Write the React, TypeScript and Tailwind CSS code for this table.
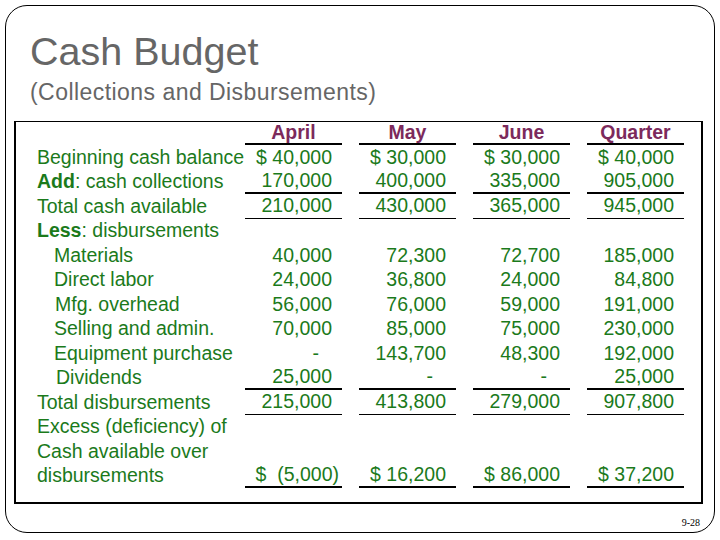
import React from 'react';

type Row = {
  label: React.ReactNode;
  indent?: string;
  values?: string[];
  line?: 'thick' | 'thin';
  header?: boolean;
};

const rows: Row[] = [
  { label: '', values: ['April', 'May', 'June', 'Quarter'], line: 'thick', header: true },
  { label: 'Beginning cash balance', values: ['$ 40,000', '$ 30,000', '$ 30,000', '$ 40,000'] },
  {
    label: (
      <>
        <span className="font-bold">Add</span>: cash collections
      </>
    ),
    values: ['170,000', '400,000', '335,000', '905,000'],
    line: 'thick',
  },
  { label: 'Total cash available', values: ['210,000', '430,000', '365,000', '945,000'], line: 'thin' },
  {
    label: (
      <>
        <span className="font-bold">Less</span>: disbursements
      </>
    ),
  },
  { label: 'Materials', indent: 'pl-[17px]', values: ['40,000', '72,300', '72,700', '185,000'] },
  { label: 'Direct labor', indent: 'pl-[17px]', values: ['24,000', '36,800', '24,000', '84,800'] },
  { label: 'Mfg. overhead', indent: 'pl-[18px]', values: ['56,000', '76,000', '59,000', '191,000'] },
  { label: 'Selling and admin.', indent: 'pl-[17px]', values: ['70,000', '85,000', '75,000', '230,000'] },
  { label: 'Equipment purchase', indent: 'pl-[17px]', values: ['-', '143,700', '48,300', '192,000'] },
  { label: 'Dividends', indent: 'pl-[19px]', values: ['25,000', '-', '-', '25,000'], line: 'thick' },
  { label: 'Total disbursements', values: ['215,000', '413,800', '279,000', '907,800'], line: 'thin' },
  { label: 'Excess (deficiency) of' },
  { label: 'Cash available over' },
  { label: 'disbursements', values: ['$  (5,000)', '$ 16,200', '$ 86,000', '$ 37,200'], line: 'thick' },
];

const Cell = ({ value, row }: { value?: string; row: Row }) => {
  const border =
    row.line === 'thick' ? 'border-b-2 border-black' : row.line === 'thin' ? 'border-b border-black' : '';

  if (row.header) {
    return (
      <div className={`w-[97px] h-full flex items-center justify-center font-bold text-[#7c2a5c] ${border}`}>
        {value}
      </div>
    );
  }

  // dash sits left of the number column, like Excel's accounting format
  const pad = value === '-' ? 'pr-[23px]' : value?.includes('(') ? 'pr-[3px]' : 'pr-[10px]';

  return (
    <div className={`w-[97px] h-full flex items-center justify-end whitespace-pre ${pad} ${border}`}>
      {value}
    </div>
  );
};

export default function App() {
  return (
    <div className="w-[720px] h-[540px] bg-white p-[5px] font-['Liberation_Sans',Arial,sans-serif]">
      <div className="w-[710px] h-[528px] border border-black rounded-[22px] flex flex-col">
        {/* Title */}
        <div className="pl-[24px] mt-[26px] text-[39.5px] leading-none text-[#666666]">Cash Budget</div>
        <div className="pl-[24px] mt-[9px] text-[23px] leading-none tracking-[0.45px] text-[#666666]">
          (Collections and Disbursements)
        </div>

        {/* Table box */}
        <div className="mt-[17px] ml-[8px] mr-[11px] h-[383px] border-2 border-t border-black pl-[21px] flex flex-col text-[19.5px] text-[#1b7a1b]">
          {rows.map((row, i) => (
            <div key={i} className={`flex ${i === 0 ? 'h-[23.5px]' : 'h-[24.5px]'}`}>
              <div className={`w-[208px] flex items-center whitespace-nowrap ${row.indent ?? ''}`}>{row.label}</div>
              <div className="flex gap-[17px] h-full">
                {row.values
                  ? row.values.map((v, j) => <Cell key={j} value={v} row={row} />)
                  : null}
              </div>
            </div>
          ))}
        </div>

        {/* Page number */}
        <div className="flex justify-end pr-[14px] mt-[14px]">
          <span className="font-['Liberation_Serif',serif] text-[10px] leading-none text-black">9-28</span>
        </div>
      </div>
    </div>
  );
}
